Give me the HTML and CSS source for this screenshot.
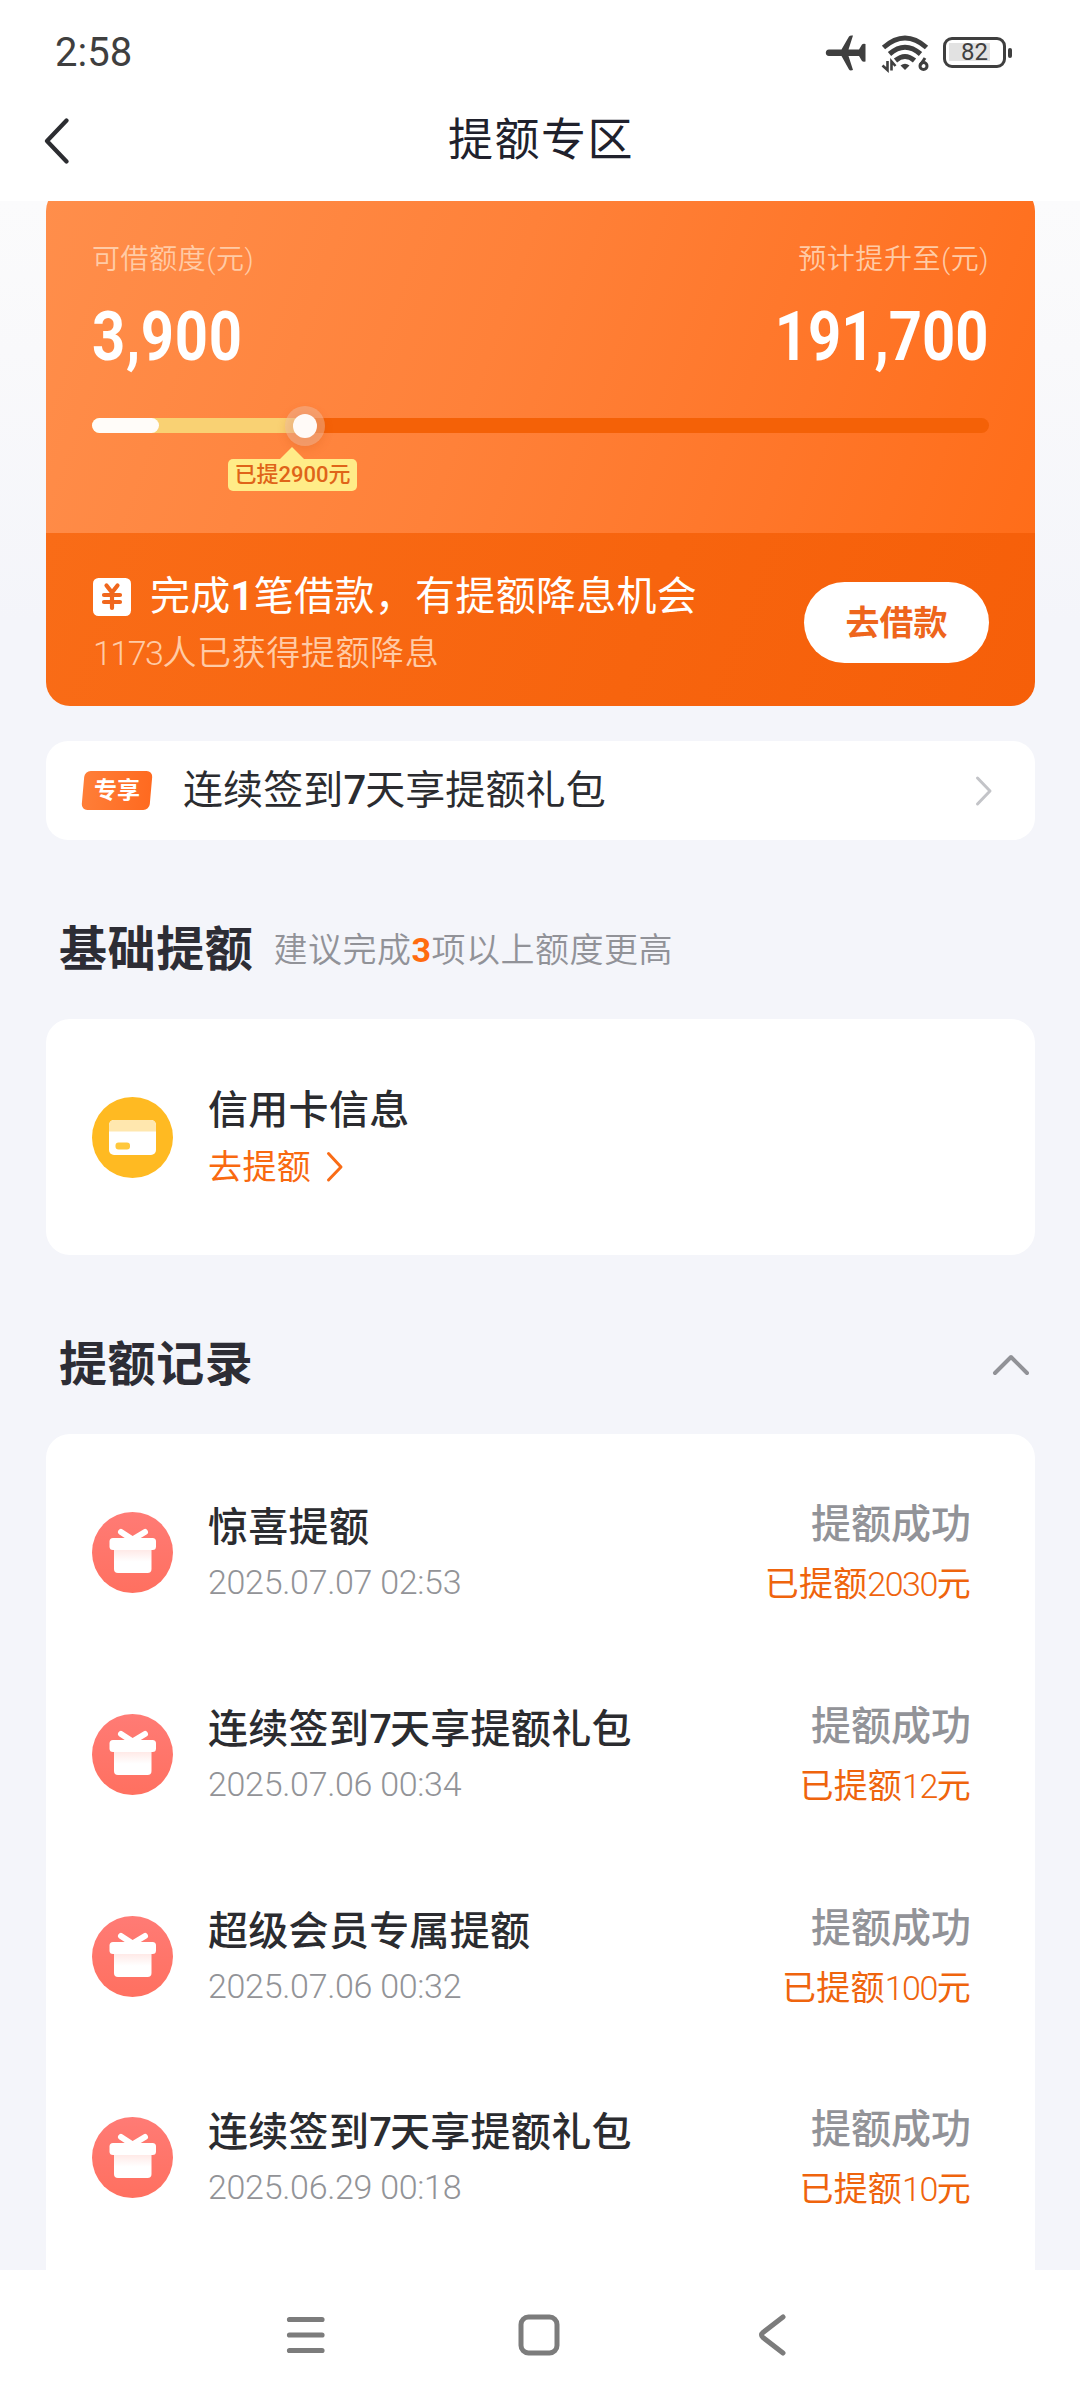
FILE: index.html
```html
<!DOCTYPE html>
<html lang="zh-CN">
<head>
<meta charset="utf-8">
<title>提额专区</title>
<link rel="stylesheet" href="styles.css">
</head>
<body>
<svg class="defs" width="0" height="0" aria-hidden="true">
  <defs>
    <linearGradient id="gift-bg" x1="0" y1="0" x2="0" y2="1"><stop offset="0" stop-color="#ff7b75"/><stop offset="1" stop-color="#ff7060"/></linearGradient>
    <linearGradient id="gift-box" x1="0" y1="0" x2="0" y2="1"><stop offset="0" stop-color="#ffe6e3"/><stop offset=".55" stop-color="#fff"/></linearGradient>
    <symbol id="gift" viewBox="0 0 81 81">
      <circle cx="40.5" cy="40.5" r="40.5" fill="url(#gift-bg)"/>
      <path d="M29 20l11.500 7.500L53 20" fill="none" stroke="#fff" stroke-width="6" stroke-linecap="round" stroke-linejoin="round"/>
      <path d="M22 36h37.500v21a4 4 0 0 1-4 4H26a4 4 0 0 1-4-4z" fill="url(#gift-box)"/>
      <rect x="17.500" y="26" width="46.500" height="12" rx="3.500" fill="#fff"/>
    </symbol>
  </defs>
</svg>

<header class="top">
  <div class="status">
    <span class="clock">2:58</span>
    <div class="status-icons">
      <svg width="42" height="36" viewBox="0 0 42 36"><path d="M4 14.500H16.500L24 1.500Q25 0 28 .5L23.500 14.500H34L37 9.500Q38 8.500 40.500 9V26.500Q38 27 37 26L34 21H23.500L28 35Q25 36 24 34.500L16.500 21H4Q.8 20.500.8 17.700T4 14.500Z" fill="#3f3f3f"/></svg>
      <svg class="wifi" width="48" height="38" viewBox="0 0 48 38">
        <g fill="none" stroke="#3f3f3f" stroke-width="5"><path d="M2.500 12.500Q24-6.500 45.500 12.500"/><path d="M8.500 19Q24 5.500 39.500 19"/><path d="M14.500 25.500Q24 17.500 33.500 25.500"/></g>
        <path d="M19.500 30.500Q24 27 28.500 30.500L24 35Z" fill="#3f3f3f"/>
        <g fill="none" stroke="#3f3f3f" stroke-width="2.600"><path d="M6.500 26v9L1.500 30.500M10.500 35.500v-9L14.500 31"/></g>
        <circle cx="42.500" cy="31" r="3.500" fill="none" stroke="#3f3f3f" stroke-width="3"/><path d="M44 23l-4.600 7" stroke="#3f3f3f" stroke-width="3"/>
      </svg>
      <div class="battery"><span class="battery-body"><b>82</b></span><i></i></div>
    </div>
  </div>
  <div class="navbar">
    <svg width="26" height="46" viewBox="0 0 26 46"><path d="M22.500 2.500L3 23l19.500 20.500" fill="none" stroke="#2c2d31" stroke-width="4.200" stroke-linecap="round" stroke-linejoin="round"/></svg>
    <h1>提额专区</h1>
  </div>
</header>

<main class="content">
  <section class="quota">
    <div class="quota-main">
      <div class="labels"><span>可借额度(元)</span><span>预计提升至(元)</span></div>
      <div class="amounts"><strong class="from">3,900</strong><strong class="to">191,700</strong></div>
      <div class="track"><div class="gained"></div><div class="base"></div><div class="knob"></div></div>
      <div class="tip">已提<span>2900</span>元</div>
    </div>
    <div class="quota-task">
      <div>
        <div class="task-title">
          <svg width="38" height="38" viewBox="0 0 38 38"><rect width="38" height="38" rx="5.500" fill="#fff"/><path d="M13.500 7.500L19 14.500L24.500 7.500M11 17H27M11 24H27M19 15V30" fill="none" stroke="#f0671d" stroke-width="4.200" stroke-linecap="round" stroke-linejoin="round"/></svg>
          <span>完成<b>1</b>笔借款，有提额降息机会</span>
        </div>
        <div class="task-sub"><span class="num">1173</span>人已获得提额降息</div>
      </div>
      <a class="borrow">去借款</a>
    </div>
  </section>

  <section class="promo">
    <span class="tag"><span>专享</span></span>
    <span class="promo-text">连续签到<b>7</b>天享提额礼包</span>
    <svg width="18" height="32" viewBox="0 0 18 32"><path d="M2.500 3L15 16L2.500 29" fill="none" stroke="#c3c4c8" stroke-width="3" stroke-linecap="round" stroke-linejoin="round"/></svg>
  </section>

  <div class="heading"><h2>基础提额</h2><span>建议完成<b>3</b>项以上额度更高</span></div>

  <section class="card basic">
    <svg class="icon" viewBox="0 0 81 81"><circle cx="40.500" cy="40.500" r="40.500" fill="#ffba22"/><rect x="17" y="23" width="47" height="35" rx="5" fill="#fff"/><path d="M17 34.500V28a5 5 0 0 1 5-5H59a5 5 0 0 1 5 5v6.500z" fill="#ffe7ae"/><rect x="23.500" y="45.500" width="14.500" height="7" rx="3" fill="#ffc83c"/></svg>
    <div>
      <div class="name">信用卡信息</div>
      <div class="go">去提额<svg width="18" height="32" viewBox="0 0 18 32"><path d="M2.500 2.500L15 16L2.500 29" fill="none" stroke="#f96c16" stroke-width="3" stroke-linecap="round" stroke-linejoin="round"/></svg></div>
    </div>
  </section>

  <div class="heading records-heading"><h2>提额记录</h2><svg width="38" height="22" viewBox="0 0 38 22"><path d="M3 19L19 3L35 19" fill="none" stroke="#919297" stroke-width="4" stroke-linecap="round" stroke-linejoin="round"/></svg></div>

  <section class="card records">
    <div class="record"><svg class="icon"><use href="#gift"/></svg><div><div class="name">惊喜提额</div><time>2025.07.07 02:53</time></div><div class="result"><div>提额成功</div><p>已提额<span class="num">2030</span>元</p></div></div>
    <div class="record"><svg class="icon"><use href="#gift"/></svg><div><div class="name">连续签到<span>7</span>天享提额礼包</div><time>2025.07.06 00:34</time></div><div class="result"><div>提额成功</div><p>已提额<span class="num">12</span>元</p></div></div>
    <div class="record"><svg class="icon"><use href="#gift"/></svg><div><div class="name">超级会员专属提额</div><time>2025.07.06 00:32</time></div><div class="result"><div>提额成功</div><p>已提额<span class="num">100</span>元</p></div></div>
    <div class="record"><svg class="icon"><use href="#gift"/></svg><div><div class="name">连续签到<span>7</span>天享提额礼包</div><time>2025.06.29 00:18</time></div><div class="result"><div>提额成功</div><p>已提额<span class="num">10</span>元</p></div></div>
  </section>
</main>

<nav class="system">
  <svg width="44" height="44" viewBox="0 0 44 44"><path d="M5.500 6.500H38M5.500 22H38M5.500 37.500H38" stroke="#7c7c7c" stroke-width="5.200" stroke-linecap="round"/></svg>
  <svg width="44" height="44" viewBox="0 0 44 44"><rect x="4" y="4" width="36" height="36" rx="7.500" fill="none" stroke="#7c7c7c" stroke-width="5"/></svg>
  <svg width="44" height="44" viewBox="0 0 44 44"><path d="M33 4L13 19.500Q10 22 13 24.500L33 40" fill="none" stroke="#7c7c7c" stroke-width="5" stroke-linecap="round"/></svg>
</nav>
</body>
</html>
```
FILE: styles.css
```css
* { box-sizing: border-box; }
body {
  margin: 0;
  width: 1080px;
  height: 2400px;
  display: flex;
  flex-direction: column;
  overflow: hidden;
  background: #fff;
  color: #2b2c30;
  font-family: Roboto, "Noto Sans CJK SC", sans-serif;
}
h1, h2, p { margin: 0; }
svg { display: block; flex: none; }
.defs { position: absolute; }

/* Status bar and title */
.top { flex: none; height: 201px; background: #fff; }
.status {
  height: 90px;
  padding: 15px 68px 0 55px;
  display: flex;
  justify-content: space-between;
  align-items: center;
}
.clock { font-size: 40px; line-height: 44px; color: #3f3f3f; }
.status-icons { display: flex; align-items: center; gap: 14px; }
.wifi { margin-top: 2px; }
.battery { display: flex; align-items: center; gap: 2px; }
.battery-body {
  width: 63px;
  height: 31px;
  border: 3.500px solid #3f3f3f;
  border-radius: 9px;
  background: linear-gradient(#e2e2e2, #e2e2e2) 3px 3px / 41px 18px no-repeat;
  text-align: center;
  line-height: 25px;
}
.battery-body b { font-size: 24px; font-weight: 400; color: #3f3f3f; }
.battery i { width: 4px; height: 10px; border-radius: 2px; background: #3f3f3f; }
.navbar {
  height: 101px;
  padding: 0 42px 0 44px;
  display: grid;
  grid-template-columns: 26px 1fr 26px;
  align-items: center;
}
h1 {
  font-size: 45px;
  line-height: 60px;
  font-weight: 400;
  letter-spacing: 1.500px;
  text-align: center;
  color: #20212c;
}

.content {
  height: 2069px;
  padding: 0 45px 0 46px;
  overflow: hidden;
  background: linear-gradient(#fbfbfc 0, #f9f9fb 150px, #f4f5fa 420px);
}

/* Quota card */
.quota {
  height: 519px;
  margin-top: -14px;
  border-radius: 24px;
  overflow: hidden;
  display: flex;
  flex-direction: column;
}
.quota-main {
  height: 346px;
  padding: 52px 46px 0;
  background: linear-gradient(110deg, #ff8e4b 0%, #ff8139 45%, #ff7629 75%, #ff6d19 100%);
}
.labels {
  display: flex;
  justify-content: space-between;
  font-size: 28px;
  line-height: 42px;
  letter-spacing: .6px;
  font-weight: 350;
  color: #ffcba6;
}
.amounts {
  display: flex;
  justify-content: space-between;
  height: 74px;
  margin-top: 19px;
  font-size: 69px;
  line-height: 74px;
  color: #fff;
}
.amounts strong { transform: scaleX(.84); }
.from { transform-origin: left; letter-spacing: .8px; }
.to { transform-origin: right; }
.track {
  position: relative;
  height: 15px;
  margin-top: 44px;
  border-radius: 8px;
  background: #f46107;
}
.gained, .base { position: absolute; left: 0; top: 0; height: 15px; border-radius: 8px; }
.gained { width: 213px; background: #f9d173; }
.base { width: 67px; background: #fffcf9; }
.knob {
  position: absolute;
  left: 201px;
  top: -4px;
  width: 24px;
  height: 24px;
  border-radius: 50%;
  background: #fffaf7;
  box-shadow: 0 0 0 8px rgba(240, 190, 165, .45), 0 4px 10px 7px rgba(200, 80, 20, .22);
}
.tip {
  position: relative;
  width: 129px;
  height: 32px;
  margin: 26px 0 0 136px;
  border-radius: 5px;
  background: #ffec88;
  color: #df6419;
  font-size: 22px;
  line-height: 32px;
  font-weight: 500;
  text-align: center;
  white-space: nowrap;
}
.tip::before {
  content: "";
  position: absolute;
  left: 52px;
  top: -12px;
  border: 12px solid transparent;
  border-top: 0;
  border-bottom-color: #ffec88;
}
.quota-task {
  flex: 1;
  padding: 0 46px;
  display: flex;
  justify-content: space-between;
  background: linear-gradient(110deg, #f96c17, #f7640e 60%, #f65f09);
}
.task-title {
  display: flex;
  align-items: center;
  gap: 19px;
  height: 56px;
  margin-top: 36px;
  color: #fff;
  font-size: 40px;
  font-weight: 400;
  letter-spacing: .3px;
  white-space: nowrap;
}
.task-title svg { margin-left: 1px; }
.task-title span { line-height: 56px; margin-top: -1px; }
.task-title b { font-weight: 700; }
.task-sub {
  margin: 3px 0 0 1px;
  font-size: 34px;
  line-height: 50px;
  letter-spacing: .6px;
  font-weight: 350;
  color: #ffcba6;
}
.num { letter-spacing: -1.500px; font-weight: 350; }
.borrow {
  width: 185px;
  height: 81px;
  margin-top: 49px;
  border-radius: 41px;
  background: #fff;
  color: #ee651c;
  font-size: 34px;
  line-height: 82px;
  font-weight: 700;
  text-align: center;
}

/* Sign-in promotion */
.promo {
  display: flex;
  align-items: center;
  height: 99px;
  margin-top: 35px;
  padding: 0 42px 0 37px;
  border-radius: 22px;
  background: #fff;
}
.tag {
  width: 68px;
  height: 39px;
  border-radius: 6px;
  background: linear-gradient(90deg, #ff7e38, #ff6a20);
  transform: skewX(-5deg);
  color: #fff;
  font-size: 23px;
  line-height: 40px;
  font-weight: 700;
  text-align: center;
}
.tag span { display: block; transform: skewX(5deg); }
.promo-text { flex: 1; margin-left: 32px; font-size: 40px; line-height: 56px; letter-spacing: .1px; }
.promo-text b { font-weight: 500; letter-spacing: -1px; }

.heading {
  display: flex;
  align-items: center;
  height: 70px;
  margin-top: 75px;
  padding-left: 13px;
}
h2 { font-size: 48px; line-height: 70px; font-weight: 700; letter-spacing: .6px; color: #2d2d35; }
.heading span { margin-left: 20px; font-size: 34px; line-height: 50px; letter-spacing: .5px; font-weight: 350; color: #919298; }
.heading b { font-weight: 700; color: #ff6b0f; }
.records-heading { justify-content: space-between; padding-right: 5px; }

.card { background: #fff; border-radius: 24px; }
.basic {
  display: flex;
  align-items: center;
  height: 236px;
  margin-top: 34px;
  padding-left: 46px;
}
.icon { width: 81px; height: 81px; margin-right: 35px; }
.name { font-size: 40px; line-height: 56px; font-weight: 500; letter-spacing: .3px; }
.name span { letter-spacing: -2px; }
.go {
  display: flex;
  align-items: center;
  gap: 15px;
  height: 50px;
  margin-top: 3px;
  font-size: 34px;
  line-height: 48px;
  letter-spacing: .4px;
  color: #f96910;
}

/* Records */
.records { height: 900px; margin-top: 34px; padding: 68px 64px 0 46px; }
.record { display: flex; align-items: flex-start; height: 201.800px; }
.record .icon { margin-top: 10px; }
.record time {
  display: block;
  margin-top: 1px;
  font-size: 34px;
  line-height: 50px;
  letter-spacing: -.3px;
  font-weight: 350;
  color: #929397;
}
.record .name { margin-top: -2px; }
.result { margin: -5px 0 0 auto; text-align: right; }
.result div { font-size: 40px; line-height: 56px; font-weight: 500; color: #929398; }
.result p { margin-top: 6px; font-size: 34px; line-height: 50px; letter-spacing: .2px; color: #ef640d; }

.system {
  display: flex;
  height: 130px;
  padding: 0 286px 0 284px;
  align-items: center;
  justify-content: space-between;
  background: #fff;
}
```
